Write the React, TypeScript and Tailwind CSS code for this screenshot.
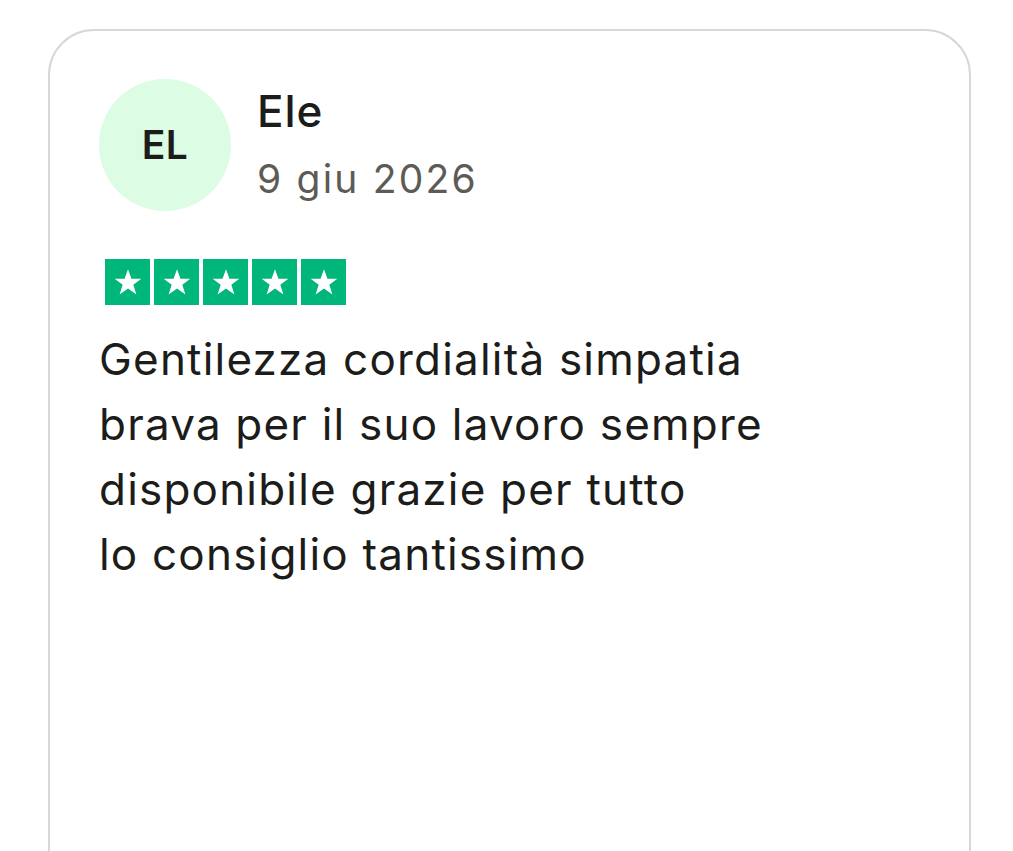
type Review = {
  initials: string;
  name: string;
  date: string;
  rating: number;
  lines: string[];
};

const review: Review = {
  initials: "EL",
  name: "Ele",
  date: "9 giu 2026",
  rating: 5,
  lines: [
    "Gentilezza cordialità simpatia",
    "brava per il suo lavoro sempre",
    "disponibile grazie per tutto",
    "lo consiglio tantissimo",
  ],
};

function StarBox() {
  return (
    <div className="flex h-[46px] w-[45px] items-center justify-center bg-[#00b67a]">
      <svg viewBox="0 0 24 24" className="h-[32px] w-[32px]" fill="#ffffff">
        <path d="M12 2.5l2.6 7.1h7.4l-6 4.5 2.3 7.3L12 16.9l-6.3 4.5 2.3-7.3-6-4.5h7.4z" />
      </svg>
    </div>
  );
}

export default function App() {
  return (
    <div
      className="min-h-[851px] bg-white px-[48px] pt-[29px]"
      style={{ fontFamily: "Inter, 'Liberation Sans', sans-serif" }}
    >
      <div className="h-[900px] w-[923px] rounded-[46px] border-2 border-[#dcd6d2] px-[49px] pt-[48px]">
        {/* header: avatar + name/date */}
        <div className="flex items-center gap-[26px]">
          <div className="flex h-[132px] w-[132px] shrink-0 items-center justify-center rounded-full bg-[#dcfce3]">
            <span className="text-[39px] font-semibold tracking-[0.5px] text-[#1c1c1a]">{review.initials}</span>
          </div>
          <div className="flex flex-col">
            <span className="text-[44px] font-medium leading-[60px] tracking-[1px] text-[#1c1c1a]">{review.name}</span>
            <span className="mt-[8px] text-[39px] leading-[60px] tracking-[2.2px] text-[#5c5b55]">{review.date}</span>
          </div>
        </div>

        {/* rating */}
        <div className="mt-[48px] flex gap-[4px] pl-[6px]">
          {Array.from({ length: review.rating }).map((_, i) => (
            <StarBox key={i} />
          ))}
        </div>

        {/* body */}
        <div className="mt-[22px] flex flex-col text-[44px] leading-[65px] tracking-[1.2px] text-[#1c1c1a]">
          {review.lines.map((l) => (
            <p key={l}>{l}</p>
          ))}
        </div>
      </div>
    </div>
  );
}
